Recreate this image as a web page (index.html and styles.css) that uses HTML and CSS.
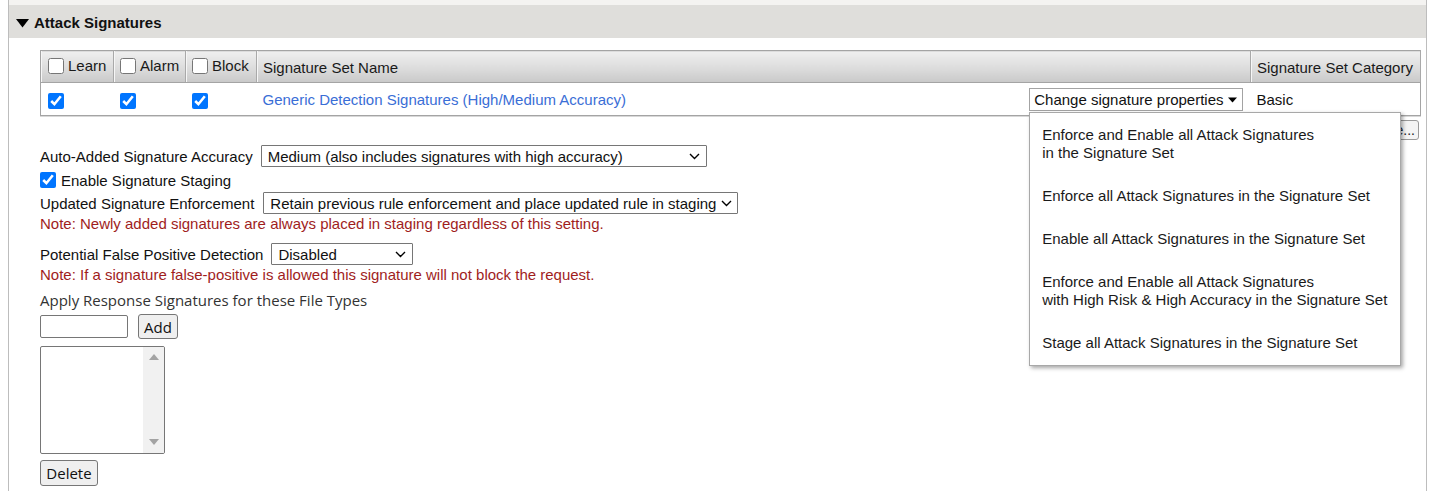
FILE: index.html
```html
<!DOCTYPE html>
<html lang="en">
<head>
<meta charset="utf-8">
<title>Attack Signatures</title>
<link rel="stylesheet" href="styles.css">
</head>
<body>
<div class="panel">
  <div class="top-strip"></div>
  <div class="section-head">
    <svg class="caret" width="13" height="9" viewBox="0 0 13 9"><path d="M0 0 H13 L6.5 8.5 Z" fill="#000"/></svg>
    <span>Attack Signatures</span>
  </div>
  <div class="content">
    <table class="sig-table">
      <colgroup>
        <col class="c-learn"><col class="c-alarm"><col class="c-block"><col class="c-name"><col class="c-cat">
      </colgroup>
      <thead>
        <tr>
          <th><label class="chk-label"><input type="checkbox" class="chk">Learn</label></th>
          <th><label class="chk-label"><input type="checkbox" class="chk">Alarm</label></th>
          <th><label class="chk-label"><input type="checkbox" class="chk">Block</label></th>
          <th>Signature Set Name</th>
          <th>Signature Set Category</th>
        </tr>
      </thead>
      <tbody>
        <tr>
          <td><input type="checkbox" class="chk" checked></td>
          <td><input type="checkbox" class="chk" checked></td>
          <td><input type="checkbox" class="chk" checked></td>
          <td>
            <div class="name-cell">
              <a class="set-link" href="#">Generic Detection Signatures (High/Medium Accuracy)</a>
              <div class="dropdown">
                <button class="dd-btn" type="button">Change signature properties
                  <svg width="9" height="6" viewBox="0 0 9 6"><path d="M0 0.5 H9 L4.5 5.5 Z" fill="#000"/></svg>
                </button>
                <ul class="dd-menu">
                  <li>Enforce and Enable all Attack Signatures<br>in the Signature Set</li>
                  <li>Enforce all Attack Signatures in the Signature Set</li>
                  <li>Enable all Attack Signatures in the Signature Set</li>
                  <li>Enforce and Enable all Attack Signatures<br>with High Risk &amp; High Accuracy in the Signature Set</li>
                  <li>Stage all Attack Signatures in the Signature Set</li>
                </ul>
              </div>
            </div>
          </td>
          <td>Basic</td>
        </tr>
      </tbody>
    </table>

    <div class="table-actions">
      <button class="small-btn" type="button">Change...</button>
    </div>

    <div class="form">
      <div class="row row-accuracy">
        <span>Auto-Added Signature Accuracy</span>
        <div class="select sel-accuracy">
          <select><option>Medium (also includes signatures with high accuracy)</option></select>
          <svg class="chev" width="11" height="7" viewBox="0 0 11 7"><path d="M1 1 L5.5 5.5 L10 1" fill="none" stroke="#000" stroke-width="1.4"/></svg>
        </div>
      </div>
      <div class="row row-staging">
        <label class="chk-label"><input type="checkbox" class="chk" checked>Enable Signature Staging</label>
      </div>
      <div class="row row-enforce">
        <span>Updated Signature Enforcement</span>
        <div class="select sel-enforce">
          <select><option>Retain previous rule enforcement and place updated rule in staging</option></select>
          <svg class="chev" width="11" height="7" viewBox="0 0 11 7"><path d="M1 1 L5.5 5.5 L10 1" fill="none" stroke="#000" stroke-width="1.4"/></svg>
        </div>
      </div>
      <div class="note">Note: Newly added signatures are always placed in staging regardless of this setting.</div>

      <div class="row row-fp">
        <span>Potential False Positive Detection</span>
        <div class="select sel-fp">
          <select><option>Disabled</option></select>
          <svg class="chev" width="11" height="7" viewBox="0 0 11 7"><path d="M1 1 L5.5 5.5 L10 1" fill="none" stroke="#000" stroke-width="1.4"/></svg>
        </div>
      </div>
      <div class="note">Note: If a signature false-positive is allowed this signature will not block the request.</div>

      <div class="apply-title">Apply Response Signatures for these File Types</div>
      <div class="add-row">
        <input type="text" class="text-input">
        <button class="os-btn add-btn" type="button">Add</button>
      </div>
      <div class="listbox">
        <div class="list-area"></div>
        <div class="scrollbar">
          <svg width="10" height="6" viewBox="0 0 10 6"><path d="M0 6 L5 0 L10 6 Z" fill="#a3a3a3"/></svg>
          <svg width="10" height="6" viewBox="0 0 10 6"><path d="M0 0 L10 0 L5 6 Z" fill="#a3a3a3"/></svg>
        </div>
      </div>
      <button class="os-btn delete-btn" type="button">Delete</button>
    </div>
  </div>
</div>
</body>
</html>
```

FILE: styles.css
```css
* { box-sizing: border-box; }

html, body {
  margin: 0;
  padding: 0;
  background: #fff;
}

body {
  font-family: "Liberation Sans", Arial, sans-serif;
  font-size: 15px;
  color: #111;
  overflow: hidden;
}

.panel {
  margin-left: 8px;
  width: 1419px;
  height: 491px;
  border-left: 1px solid #bdbdbd;
  border-right: 1px solid #bdbdbd;
}

.top-strip {
  height: 5px;
  background: #f4f3f1;
}

.section-head {
  height: 33px;
  background: #dfdedb;
  display: flex;
  align-items: center;
  gap: 5px;
  padding-left: 7px;
  padding-top: 2px;
  font-weight: bold;
  font-size: 15px;
  color: #111;
}

.caret { margin-top: 1px; }

.content {
  padding: 12px 6px 0 31px;
}

/* ---------- table ---------- */
.sig-table {
  width: 1380px;
  border-collapse: collapse;
  table-layout: fixed;
  border: 1px solid #a4a4a4;
  box-shadow: 0 1px 0 #d8d8d8;
}

.c-learn { width: 73px; }
.c-alarm { width: 72px; }
.c-block { width: 71px; }
.c-name { width: 994px; }
.c-cat { width: 170px; }

.sig-table th {
  height: 32px;
  padding: 1px 6px 0;
  text-align: left;
  font-weight: normal;
  color: #1a1a1a;
  background: linear-gradient(#efefef, #dcdcdc 55%, #c9c9c9);
  border-right: 1px solid #a9a9a9;
  border-bottom: 1px solid #a4a4a4;
  box-shadow: inset 1px 0 0 #f6f6f6;
  white-space: nowrap;
}

.sig-table th:first-child { padding-left: 7px; }

.sig-table td {
  height: 33px;
  padding: 1px 6px 0;
  background: #fff;
  vertical-align: middle;
}

.sig-table td:first-child { padding-left: 7px; }

.chk {
  width: 16px;
  height: 16px;
  margin: 0;
  accent-color: #0075ff;
  vertical-align: middle;
}

.chk-label {
  display: inline-flex;
  align-items: center;
  gap: 4px;
}

.name-cell {
  display: flex;
  align-items: center;
  justify-content: space-between;
  padding-right: 2px;
}

.set-link {
  color: #3a6ed6;
  text-decoration: none;
}

.dropdown {
  position: relative;
}

.dd-btn {
  display: flex;
  align-items: center;
  gap: 4px;
  height: 23px;
  padding: 0 5px 0 4px;
  background: #fff;
  border: 1px solid #a3a3a3;
  border-radius: 0;
  font-family: inherit;
  font-size: 15px;
  color: #111;
}

.dd-menu {
  position: absolute;
  top: 24px;
  left: 0;
  width: 372px;
  margin: 0;
  padding: 0;
  list-style: none;
  background: #fff;
  border: 1px solid #a8a8a8;
  box-shadow: 2px 2px 4px rgba(0, 0, 0, 0.35);
  z-index: 10;
}

.dd-menu li {
  padding: 12.5px 12px;
  line-height: 18px;
  color: #1a1a1a;
  white-space: nowrap;
}

.dd-menu li:first-child { padding-top: 13px; }

/* ---------- actions under table ---------- */
.table-actions {
  display: flex;
  justify-content: flex-end;
  margin-top: 4px;
  padding-right: 1px;
}

.small-btn {
  height: 20px;
  padding: 0 3px 0 6px;
  font-family: inherit;
  font-size: 14px;
  background: #f4f4f4;
  border: 1px solid #9a9a9a;
  border-radius: 3px;
  color: #222;
  line-height: 18px;
}

/* ---------- form ---------- */
.form {
  margin-top: 5px;
}

.row {
  display: flex;
  align-items: center;
  gap: 8px;
  height: 22px;
}

.row-staging { margin-top: 2px; }
.row-staging .chk-label { gap: 5px; }
.row-enforce { margin-top: 1px; gap: 9px; }
.row-fp { margin-top: 10px; }

.select {
  display: flex;
  align-items: center;
  height: 22px;
  padding: 0 6px;
  border: 1px solid #767676;
  border-radius: 1px;
  background: #fff;
}

.select select {
  appearance: none;
  -webkit-appearance: none;
  flex: 1;
  min-width: 0;
  border: none;
  background: transparent;
  padding: 0;
  margin: 0;
  font-family: inherit;
  font-size: 15px;
  color: #111;
  outline: none;
}

.sel-accuracy { width: 446px; }
.sel-enforce { width: 475px; padding-right: 5px; }
.sel-fp { width: 142px; }

.note {
  color: #a01d1d;
  line-height: 18px;
  margin-top: 1px;
}

.apply-title {
  font-family: "Open Sans", "Noto Sans", sans-serif;
  font-size: 15px;
  color: #333;
  line-height: 18px;
  margin-top: 7px;
}

.add-row {
  display: flex;
  align-items: center;
  gap: 10px;
  margin-top: 5px;
  height: 25px;
}

.text-input {
  width: 88px;
  height: 23px;
  border: 1px solid #767676;
  border-radius: 2px;
  margin: 0;
}

.os-btn {
  font-family: "Open Sans", "Noto Sans", sans-serif;
  font-size: 15px;
  color: #111;
  background: #efefef;
  border: 1px solid #767676;
  border-radius: 3px;
  padding: 0;
  margin: 0;
}

.add-btn {
  width: 40px;
  height: 25px;
}

.listbox {
  display: flex;
  width: 125px;
  height: 108px;
  margin-top: 7px;
  border: 1px solid #767676;
  border-radius: 2px;
  background: #fff;
  overflow: hidden;
}

.list-area { flex: 1; }

.scrollbar {
  width: 21px;
  background: #f1f1f1;
  display: flex;
  flex-direction: column;
  justify-content: space-between;
  align-items: center;
  padding: 7px 0 8px;
}

.delete-btn {
  display: block;
  width: 58px;
  height: 26px;
  margin-top: 6px;
}
```
